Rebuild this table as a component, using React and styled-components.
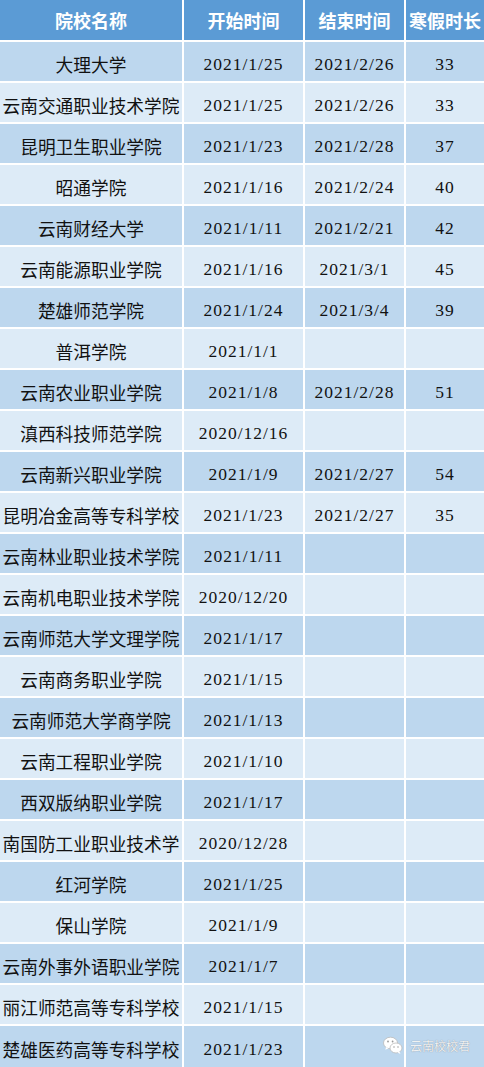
import React from 'react'
import styled, { createGlobalStyle } from 'styled-components'

const GlobalStyle = createGlobalStyle`
  html, body {
    margin: 0;
    padding: 0;
    background: #ffffff;
  }
`

const rows = [
  ['大理大学', '2021/1/25', '2021/2/26', '33'],
  ['云南交通职业技术学院', '2021/1/25', '2021/2/26', '33'],
  ['昆明卫生职业学院', '2021/1/23', '2021/2/28', '37'],
  ['昭通学院', '2021/1/16', '2021/2/24', '40'],
  ['云南财经大学', '2021/1/11', '2021/2/21', '42'],
  ['云南能源职业学院', '2021/1/16', '2021/3/1', '45'],
  ['楚雄师范学院', '2021/1/24', '2021/3/4', '39'],
  ['普洱学院', '2021/1/1', '', ''],
  ['云南农业职业学院', '2021/1/8', '2021/2/28', '51'],
  ['滇西科技师范学院', '2020/12/16', '', ''],
  ['云南新兴职业学院', '2021/1/9', '2021/2/27', '54'],
  ['昆明冶金高等专科学校', '2021/1/23', '2021/2/27', '35'],
  ['云南林业职业技术学院', '2021/1/11', '', ''],
  ['云南机电职业技术学院', '2020/12/20', '', ''],
  ['云南师范大学文理学院', '2021/1/17', '', ''],
  ['云南商务职业学院', '2021/1/15', '', ''],
  ['云南师范大学商学院', '2021/1/13', '', ''],
  ['云南工程职业学院', '2021/1/10', '', ''],
  ['西双版纳职业学院', '2021/1/17', '', ''],
  ['南国防工业职业技术学', '2020/12/28', '', ''],
  ['红河学院', '2021/1/25', '', ''],
  ['保山学院', '2021/1/9', '', ''],
  ['云南外事外语职业学院', '2021/1/7', '', ''],
  ['丽江师范高等专科学校', '2021/1/15', '', ''],
  ['楚雄医药高等专科学校', '2021/1/23', '', ''],
]

const Page = styled.div`
  position: relative;
  width: 484px;
  height: 1067px;
  overflow: hidden;
  background: #ffffff;
`

const Table = styled.div`
  display: grid;
  grid-template-columns: 182px 119px 99px 78px;
  grid-template-rows: 40px repeat(24, 39px) 41px;
  column-gap: 2px;
  row-gap: 2px;
`

const HeadCell = styled.div`
  display: flex;
  align-items: center;
  justify-content: center;
  background: #5b9bd5;
  color: #ffffff;
  font-family: "Noto Sans CJK SC", sans-serif;
  font-weight: 700;
  font-size: 18px;
  white-space: nowrap;
  overflow: hidden;
`

const Cell = styled.div`
  display: flex;
  align-items: center;
  justify-content: center;
  background: ${p => (p.$dark ? '#bdd7ee' : '#ddebf7')};
  color: #111111;
  font-family: "Liberation Serif", "Noto Sans CJK SC", serif;
  font-size: ${p => (p.$name ? '17.7px' : '17.5px')};
  letter-spacing: ${p => (p.$name ? '0' : '1px')};
  padding-top: 5px;
  white-space: nowrap;
  overflow: hidden;
`

const Mark = styled.div`
  position: absolute;
  left: 383px;
  top: 1036px;
  display: flex;
  align-items: center;
  gap: 7px;
  color: rgba(255, 255, 255, 0.88);
  font-family: "Noto Sans CJK SC", sans-serif;
  font-size: 12px;
  text-shadow: 0 0 1px rgba(90, 90, 90, 0.7);
`

const WechatIcon = () => (
  <svg width="20" height="19" viewBox="0 0 20 19">
    <ellipse cx="7.5" cy="7" rx="7" ry="5.8" fill="#ffffff" stroke="#bbbbbb" strokeWidth="0.8" />
    <path d="M3 11 L2.4 13.8 L5.6 12.2 Z" fill="#ffffff" />
    <ellipse cx="13" cy="12" rx="6" ry="5" fill="#ffffff" stroke="#bbbbbb" strokeWidth="0.8" />
    <path d="M16.5 15.5 L17.4 18 L14.6 16.6 Z" fill="#ffffff" />
    <circle cx="5" cy="5.5" r="0.9" fill="#9a9a9a" />
    <circle cx="9.6" cy="5.5" r="0.9" fill="#9a9a9a" />
    <circle cx="11" cy="11" r="0.75" fill="#9a9a9a" />
    <circle cx="15" cy="11" r="0.75" fill="#9a9a9a" />
  </svg>
)

const App = () => {
  return (
    <Page>
      <GlobalStyle />
      <Table>
        <HeadCell>院校名称</HeadCell>
        <HeadCell>开始时间</HeadCell>
        <HeadCell>结束时间</HeadCell>
        <HeadCell>寒假时长</HeadCell>
        {rows.map((r, i) => (
          <React.Fragment key={i}>
            <Cell $dark={i % 2 === 0} $name>{r[0]}</Cell>
            <Cell $dark={i % 2 === 0}>{r[1]}</Cell>
            <Cell $dark={i % 2 === 0}>{r[2]}</Cell>
            <Cell $dark={i % 2 === 0}>{r[3]}</Cell>
          </React.Fragment>
        ))}
      </Table>
      <Mark>
        <WechatIcon />
        <span>云南校校君</span>
      </Mark>
    </Page>
  )
}

export default App
